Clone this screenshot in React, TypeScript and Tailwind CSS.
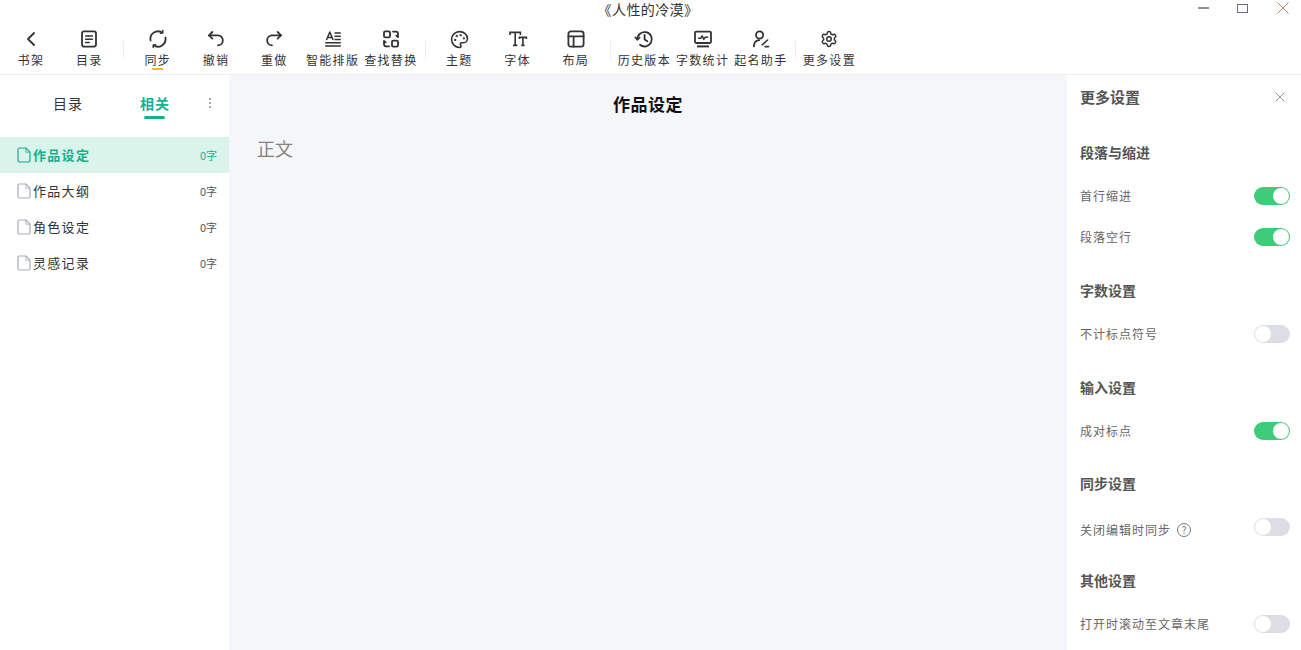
import React from 'react';
import { ChevronLeft, Palette, Settings, X } from 'lucide-react';

const FONT = '"Noto Sans CJK SC", "Liberation Sans", sans-serif';

const svgProps = {
  width: 20,
  height: 20,
  viewBox: '0 0 20 20',
  fill: 'none',
  stroke: '#333333',
  strokeWidth: 1.8,
  strokeLinecap: 'round' as const,
  strokeLinejoin: 'round' as const,
};

function IconToc() {
  return (
    <svg {...svgProps}>
      <rect x="3" y="2.400" width="14" height="15.200" rx="2" />
      <path d="M6.600 7h6.800M6.600 10.200h6.800M6.600 13.400h3.600" strokeWidth={1.500} />
    </svg>
  );
}

function IconSync() {
  return (
    <svg {...svgProps}>
      <path d="M2.600 11.500A7.600 7.600 0 0 1 14.500 3.800M17.400 8.500A7.600 7.600 0 0 1 5.500 16.200" />
      <path d="M14.800 1.600 14.500 3.800 12.400 4.200M5.200 18.400 5.500 16.200 7.600 15.800" strokeWidth={1.500} />
    </svg>
  );
}

function IconUndo() {
  return (
    <svg {...svgProps}>
      <path d="M6.400 3 3 6.400l3.400 3.200" />
      <path d="M3 6.400h9a4.800 4.800 0 0 1 4.800 4.800v.3a4.800 4.800 0 0 1-4.800 4.800" />
    </svg>
  );
}

function IconRedo() {
  return (
    <svg {...svgProps}>
      <path d="M13.600 3 17 6.400l-3.400 3.200" />
      <path d="M17 6.400H8a4.800 4.800 0 0 0-4.800 4.800v.3A4.800 4.800 0 0 0 8 16.300" />
    </svg>
  );
}

function IconFormat() {
  return (
    <svg {...svgProps} strokeWidth={1.500} strokeLinecap="butt">
      <path d="M3.500 11 6.800 3l3.300 8M4.700 8.600h4.200" />
      <path d="M11.500 4h6.300M11.500 7.300h6.300M11.500 10.600h6.300M2.200 13.800h15.600M2.200 17h15.600" />
    </svg>
  );
}

function IconReplace() {
  return (
    <svg {...svgProps}>
      <rect x="3" y="2.400" width="6" height="6" rx="1.200" />
      <rect x="11" y="11.600" width="6" height="6" rx="1.200" />
      <path d="M12 2.600h2.800A2.200 2.200 0 0 1 17 4.800v3.400l-1.700-1.500M8 17.400H5.200A2.200 2.200 0 0 1 3 15.200v-3.400l1.700 1.500" />
    </svg>
  );
}

function IconFontSize() {
  return (
    <svg {...svgProps} strokeWidth={1.600} strokeLinecap="butt" strokeLinejoin="miter">
      <path d="M2 6V3.400h10.400V6M7.200 3.400v13M5 16.400h4.400" />
      <path d="M11.400 10V8.400h7V10M14.900 8.400v8M13.200 16.400h3.400" />
    </svg>
  );
}

function IconLayout() {
  return (
    <svg {...svgProps}>
      <rect x="2.400" y="2.400" width="15.200" height="15.200" rx="2.400" />
      <path d="M2.400 7.400h15.200M7.600 7.400v10.200" />
    </svg>
  );
}

function IconHistory() {
  return (
    <svg {...svgProps}>
      <path d="M3.400 10.400A7.200 7.200 0 1 1 6 15.800" />
      <path d="M1.400 8.400l2 2.200 2.200-2" />
      <path d="M10.600 5.800v4.600l2.800 1.800" />
    </svg>
  );
}

function IconStats() {
  return (
    <svg {...svgProps}>
      <rect x="2" y="2.600" width="16" height="11.400" rx="1.200" />
      <path d="M4 17.400h12" strokeWidth={2} strokeLinecap="butt" />
      <path d="M5.600 9.200h2.200l1.400-2.400 1.600 3.600 1.400-2.200h2.400" strokeWidth={1.500} />
    </svg>
  );
}

function IconNaming() {
  return (
    <svg {...svgProps}>
      <circle cx="8.600" cy="6" r="3.600" />
      <path d="M2.800 17.400c.2-3.600 2.200-6 5.400-6.200" />
      <path d="M11.200 15.800 16.600 11" strokeWidth={1.600} />
      <path d="M14 17.600h3.600" strokeWidth={1.600} />
    </svg>
  );
}

function FileIcon({ color }: { color: string }) {
  return (
    <svg width="14" height="16" viewBox="0 0 14 16" fill="none" stroke={color} strokeWidth="1.200" strokeLinejoin="round">
      <path d="M2.400 1h6.400L13 5.200v8.400a1.400 1.400 0 0 1-1.400 1.400H2.400A1.400 1.400 0 0 1 1 13.600V2.400A1.400 1.400 0 0 1 2.400 1Z" />
      <path d="M8.800 1v4.200H13" strokeWidth="0.800" />
    </svg>
  );
}

const toolGroups: { label: string; icon: React.ReactNode; underline?: boolean }[][] = [
  [
    { label: '书架', icon: <ChevronLeft size={24} strokeWidth={1.800} color="#333333" /> },
    { label: '目录', icon: <IconToc /> },
  ],
  [
    { label: '同步', icon: <IconSync />, underline: true },
    { label: '撤销', icon: <IconUndo /> },
    { label: '重做', icon: <IconRedo /> },
    { label: '智能排版', icon: <IconFormat /> },
    { label: '查找替换', icon: <IconReplace /> },
  ],
  [
    { label: '主题', icon: <Palette size={19} strokeWidth={2} color="#333333" /> },
    { label: '字体', icon: <IconFontSize /> },
    { label: '布局', icon: <IconLayout /> },
  ],
  [
    { label: '历史版本', icon: <IconHistory /> },
    { label: '字数统计', icon: <IconStats /> },
    { label: '起名助手', icon: <IconNaming /> },
  ],
  [{ label: '更多设置', icon: <Settings size={18} strokeWidth={2} color="#333333" /> }],
];

const files = [
  { name: '作品设定', active: true },
  { name: '作品大纲' },
  { name: '角色设定' },
  { name: '灵感记录' },
];

function Toggle({ on }: { on?: boolean }) {
  return (
    <div className={`flex h-[18px] w-9 shrink-0 items-center rounded-full p-px ${on ? 'justify-end bg-[#3ecb7a]' : 'justify-start bg-[#dcdee6]'}`}>
      <div className="h-4 w-4 rounded-full bg-white" />
    </div>
  );
}

const settings: { title: string; rows: { label: string; on?: boolean; help?: boolean }[] }[] = [
  { title: '段落与缩进', rows: [{ label: '首行缩进', on: true }, { label: '段落空行', on: true }] },
  { title: '字数设置', rows: [{ label: '不计标点符号' }] },
  { title: '输入设置', rows: [{ label: '成对标点', on: true }] },
  { title: '同步设置', rows: [{ label: '关闭编辑时同步', help: true }] },
  { title: '其他设置', rows: [{ label: '打开时滚动至文章末尾' }] },
];

export default function App() {
  return (
    <div className="flex h-[650px] w-[1301px] flex-col overflow-hidden bg-white" style={{ fontFamily: FONT }}>
      {/* 顶部栏 */}
      <header className="h-[75px] shrink-0 border-b border-[#eeeeee] bg-white">
        <div className="flex h-[22px] items-start">
          <div className="w-[1189px] pl-[107px] text-center text-[14px] leading-[19px] tracking-[0.4px] text-[#333333]">《人性的冷漠》</div>
          <div className="flex flex-1 items-center justify-between pt-[2px] pr-[12px] pl-[9px]">
            <svg width="11" height="12" viewBox="0 0 11 12"><path d="M0 6h11" stroke="#222222" strokeWidth="1" /></svg>
            <svg width="12" height="12" viewBox="0 0 12 12" fill="none"><rect x="0.500" y="2.500" width="10" height="8" stroke="#6a6a90" strokeWidth="1" /></svg>
            <svg width="12" height="12" viewBox="0 0 12 12" fill="none"><path d="M0.500 0.500l11 11M11.500 0.500l-11 11" stroke="#b8826c" strokeWidth="1" /></svg>
          </div>
        </div>
        <div className="flex h-[52px] items-start pl-[2px]">
          {toolGroups.map((group, i) => (
            <React.Fragment key={i}>
              {i > 0 && <div className="mx-[4.625px] mt-[19px] h-[18px] w-px bg-[#eeeeee]" />}
              {group.map((tool) => (
                <div key={tool.label} className="relative flex w-[58.250px] flex-col items-center">
                  <div className="mt-[5px] flex h-[24px] items-center justify-center">{tool.icon}</div>
                  <span className="text-[12px] leading-[17px] tracking-[1.300px] whitespace-nowrap text-[#333333]">{tool.label}</span>
                  {tool.underline && <div className="absolute top-[46px] h-[2px] w-[11px] bg-[#f5b81f]" />}
                </div>
              ))}
            </React.Fragment>
          ))}
        </div>
      </header>

      <div className="flex min-h-0 flex-1">
        {/* 左侧栏 */}
        <aside className="w-[229px] shrink-0 bg-white">
          <div className="flex h-[62px] pt-[18px] pl-[53px]">
            <div className="w-[87px] text-[14px] leading-5 tracking-[1px] text-[#333333]">目录</div>
            <div className="relative w-[30px] text-[14px] leading-5 font-bold tracking-[1px] whitespace-nowrap text-[#17b08c]">
              相关
              <div className="absolute top-[23px] left-[4px] h-[3px] w-[21px] rounded-full bg-[#17b08c]" />
            </div>
            <div className="ml-[39px] flex h-5 flex-col items-center justify-center gap-[2px]">
              <div className="h-[2px] w-[2px] bg-[#aaaaaa]" />
              <div className="h-[2px] w-[2px] bg-[#aaaaaa]" />
              <div className="h-[2px] w-[2px] bg-[#aaaaaa]" />
            </div>
          </div>
          {files.map((f) => (
            <div key={f.name} className={`flex h-9 items-center pr-3 pl-[17px] ${f.active ? 'bg-[#daf3eb]' : ''}`}>
              <FileIcon color={f.active ? '#17b08c' : '#a5abbd'} />
              <span className={`ml-[2px] flex-1 text-[13px] leading-[18px] tracking-[1.300px] ${f.active ? 'font-bold text-[#17b08c]' : 'text-[#333333]'}`}>{f.name}</span>
              <span className={`text-[11px] leading-[14px] ${f.active ? 'text-[#17b08c]' : 'text-[#555555]'}`}>0字</span>
            </div>
          ))}
        </aside>

        {/* 编辑区 */}
        <main className="flex-1 bg-[#f4f6fa] pt-[16px]">
          <h1 className="text-center text-[17px] leading-[26px] font-bold tracking-[0.5px] text-[#111111]">作品设定</h1>
          <p className="mt-[18px] pl-[28px] text-[18px] leading-[26px] text-[#8a817c]">正文</p>
        </main>

        {/* 更多设置 */}
        <aside className="w-[234px] shrink-0 bg-white pr-[11px] pl-[13px]">
          <div className="mb-[24px] flex h-[44px] items-center justify-between pr-[2px]">
            <span className="text-[15px] leading-5 font-bold text-[#555555]">更多设置</span>
            <X size={16} strokeWidth={1.300} color="#888888" />
          </div>
          {settings.map((group) => (
            <section key={group.title} className="mb-[34.750px]">
              <h2 className="mb-[24px] h-5 text-[14px] leading-[18px] font-bold text-[#555555]">{group.title}</h2>
              <div className="flex flex-col gap-[23px]">
                {group.rows.map((r) => (
                  <div key={r.label} className="flex h-[18px] justify-between">
                    <span className={`flex h-[18px] items-center text-[12px] leading-[18px] tracking-[1px] text-[#666666] ${r.help ? 'mt-[3px]' : ''}`}>
                      {r.label}
                      {r.help && (
                        <span className="ml-[6px] flex h-[14px] w-[14px] items-center justify-center rounded-full border border-[#777777] text-[10px] leading-none tracking-normal text-[#777777]">?</span>
                      )}
                    </span>
                    <Toggle on={r.on} />
                  </div>
                ))}
              </div>
            </section>
          ))}
        </aside>
      </div>
    </div>
  );
}
